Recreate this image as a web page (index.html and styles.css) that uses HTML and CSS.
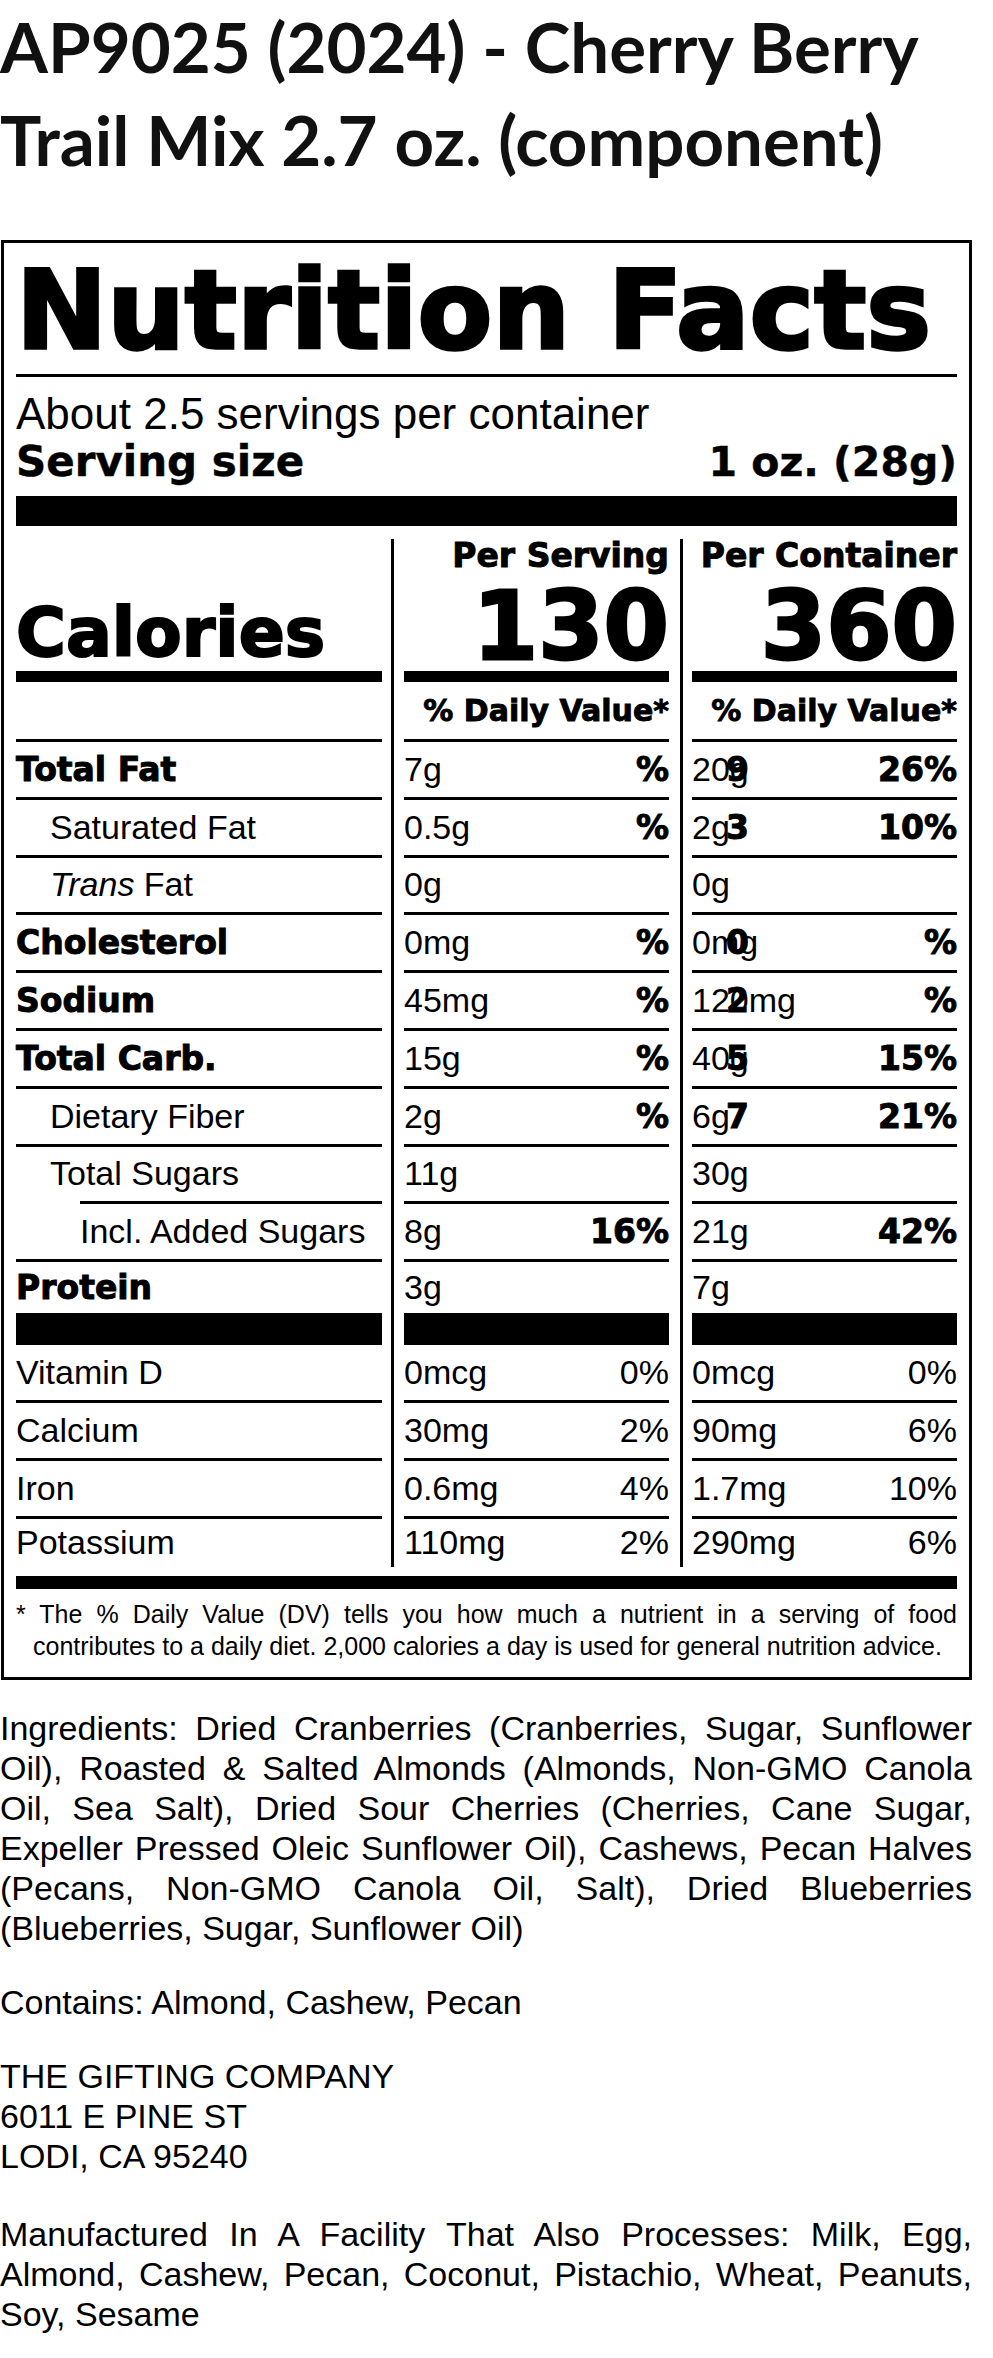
FILE: index.html
```html
<!DOCTYPE html>
<html lang="en">
<head>
<meta charset="utf-8">
<title>AP9025 (2024) - Cherry Berry Trail Mix 2.7 oz. (component)</title>
<link rel="stylesheet" href="styles.css">
</head>
<body>
<div class="page">
  <h1 class="product-title">AP9025 (2024) - Cherry Berry Trail Mix 2.7 oz. (component)</h1>

  <section class="label">
    <h2 class="nf-heading heavy">Nutrition Facts</h2>
    <div class="rule-thin"></div>
    <p class="servings">About 2.5 servings per container</p>
    <div class="serving-size heavy"><span class="ss-label">Serving size</span><span class="ss-value">1 oz. (28g)</span></div>
    <div class="bar-thick"></div>

    <div class="columns">
      <div class="col col-names">
        <div class="head head-names"><span class="calories heavy">Calories</span></div>
        <div class="bar-cal"></div>
        <div class="cell dv-head"></div>
        <div class="cell heavy-cell">Total Fat</div>
        <div class="cell indent">Saturated Fat</div>
        <div class="cell indent"><span><i>Trans</i> Fat</span></div>
        <div class="cell heavy-cell">Cholesterol</div>
        <div class="cell heavy-cell">Sodium</div>
        <div class="cell heavy-cell">Total Carb.</div>
        <div class="cell indent">Dietary Fiber</div>
        <div class="cell sugars"><span class="sugars-text">Total Sugars</span></div>
        <div class="cell indent2">Incl. Added Sugars</div>
        <div class="cell protein heavy-cell">Protein</div>
        <div class="bar-protein"></div>
        <div class="cell vit">Vitamin D</div>
        <div class="cell vit">Calcium</div>
        <div class="cell vit">Iron</div>
        <div class="cell vit vit-last">Potassium</div>
      </div>

      <div class="col col-values col-serving">
        <div class="head head-values">
          <span class="per heavy">Per Serving</span>
          <span class="big heavy">130</span>
        </div>
        <div class="bar-cal"></div>
        <div class="cell dv-head"><span></span><span class="dv-title heavy">% Daily Value*</span></div>
        <div class="cell"><span>7g</span><span class="dv heavy">%</span></div>
        <div class="cell"><span>0.5g</span><span class="dv heavy">%</span></div>
        <div class="cell"><span>0g</span></div>
        <div class="cell"><span>0mg</span><span class="dv heavy">%</span></div>
        <div class="cell"><span>45mg</span><span class="dv heavy">%</span></div>
        <div class="cell"><span>15g</span><span class="dv heavy">%</span></div>
        <div class="cell"><span>2g</span><span class="dv heavy">%</span></div>
        <div class="cell"><span>11g</span></div>
        <div class="cell"><span>8g</span><span class="dv heavy">16%</span></div>
        <div class="cell protein"><span>3g</span></div>
        <div class="bar-protein"></div>
        <div class="cell vit"><span>0mcg</span><span>0%</span></div>
        <div class="cell vit"><span>30mg</span><span>2%</span></div>
        <div class="cell vit"><span>0.6mg</span><span>4%</span></div>
        <div class="cell vit vit-last"><span>110mg</span><span>2%</span></div>
      </div>

      <div class="col col-values col-container">
        <div class="head head-values">
          <span class="per heavy">Per Container</span>
          <span class="big heavy">360</span>
        </div>
        <div class="bar-cal"></div>
        <div class="cell dv-head"><span></span><span class="dv-title heavy">% Daily Value*</span></div>
        <div class="cell"><span>20g</span><span class="stray heavy">9</span><span class="dv heavy">26%</span></div>
        <div class="cell"><span>2g</span><span class="stray heavy">3</span><span class="dv heavy">10%</span></div>
        <div class="cell"><span>0g</span></div>
        <div class="cell"><span>0mg</span><span class="stray heavy">0</span><span class="dv heavy">%</span></div>
        <div class="cell"><span>120mg</span><span class="stray heavy">2</span><span class="dv heavy">%</span></div>
        <div class="cell"><span>40g</span><span class="stray heavy">5</span><span class="dv heavy">15%</span></div>
        <div class="cell"><span>6g</span><span class="stray heavy">7</span><span class="dv heavy">21%</span></div>
        <div class="cell"><span>30g</span></div>
        <div class="cell"><span>21g</span><span class="dv heavy">42%</span></div>
        <div class="cell protein"><span>7g</span></div>
        <div class="bar-protein"></div>
        <div class="cell vit"><span>0mcg</span><span>0%</span></div>
        <div class="cell vit"><span>90mg</span><span>6%</span></div>
        <div class="cell vit"><span>1.7mg</span><span>10%</span></div>
        <div class="cell vit vit-last"><span>290mg</span><span>6%</span></div>
      </div>
    </div>

    <div class="bar-bottom"></div>
    <p class="footnote">* The % Daily Value (DV) tells you how much a nutrient in a serving of food contributes to a daily diet. 2,000 calories a day is used for general nutrition advice.</p>
  </section>

  <div class="info">
    <p class="ingredients">Ingredients: Dried Cranberries (Cranberries, Sugar, Sunflower Oil), Roasted &amp; Salted Almonds (Almonds, Non-GMO Canola Oil, Sea Salt), Dried Sour Cherries (Cherries, Cane Sugar, Expeller Pressed Oleic Sunflower Oil), Cashews, Pecan Halves (Pecans, Non-GMO Canola Oil, Salt), Dried Blueberries (Blueberries, Sugar, Sunflower Oil)</p>
    <p>Contains: Almond, Cashew, Pecan</p>
    <p>THE GIFTING COMPANY<br>6011 E PINE ST<br>LODI, CA 95240</p>
    <p class="facility">Manufactured In A Facility That Also Processes: Milk, Egg, Almond, Cashew, Pecan, Coconut, Pistachio, Wheat, Peanuts, Soy, Sesame</p>
  </div>
</div>
</body>
</html>
```

FILE: styles.css
```css
* {
  box-sizing: border-box;
}

body {
  margin: 0;
  background: #fff;
  color: #000;
  font-family: "Liberation Sans", Arial, sans-serif;
}

.page {
  width: 972px;
}

.product-title {
  margin: 0;
  font-family: Lato, "Liberation Sans", sans-serif;
  font-weight: 700;
  font-size: 69px;
  line-height: 93px;
  color: #111;
}

.heavy {
  font-family: "DejaVu Sans", "Liberation Sans", sans-serif;
  font-weight: 700;
  -webkit-text-stroke: 0.03em #000;
}

/* ---------- label ---------- */
.label {
  width: 971px;
  margin: 54px 0 0 1px;
  border: 3px solid #000;
  padding: 13px 12px 15px;
}

.nf-heading {
  margin: 0;
  font-size: 109px;
  line-height: 110px;
  white-space: nowrap;
}

.rule-thin {
  height: 3px;
  margin-top: 8px;
  background: #000;
}

.servings {
  margin: 14px 0 0;
  font-size: 44px;
  line-height: 46px;
}

.serving-size {
  display: flex;
  justify-content: space-between;
  align-items: baseline;
  padding-top: 5px;
  line-height: 40px;
}

.ss-label {
  font-size: 42px;
}

.ss-value {
  font-size: 41px;
}

.bar-thick {
  height: 30px;
  margin-top: 14px;
  background: #000;
}

/* ---------- columns ---------- */
.columns {
  display: flex;
  margin-top: 13px;
}

.col-names {
  width: 366px;
}

.col-values {
  box-sizing: content-box;
  width: 265px;
  border-left: 3px solid #000;
}

.col-serving {
  margin-left: 9px;
  padding-left: 10px;
}

.col-container {
  margin-left: 11px;
  padding-left: 9px;
}

.head {
  height: 132px;
  display: flex;
  flex-direction: column;
}

.head-names {
  justify-content: flex-end;
}

.calories {
  font-size: 68px;
  line-height: 77px;
}

.head-values {
  justify-content: space-between;
  align-items: flex-end;
}

.per {
  font-size: 33px;
  line-height: 34px;
  white-space: nowrap;
}

.big {
  font-size: 94px;
  line-height: 89px;
}

.bar-cal {
  height: 11px;
  background: #000;
}

.cell {
  position: relative;
  height: 57.8px;
  display: flex;
  align-items: center;
  justify-content: space-between;
  border-bottom: 3px solid #000;
  font-size: 34px;
  white-space: nowrap;
}

.cell.dv-head {
  height: 60px;
}

.dv-title {
  font-size: 30px;
}

.heavy-cell {
  font-family: "DejaVu Sans", "Liberation Sans", sans-serif;
  font-weight: 700;
  font-size: 33px;
  -webkit-text-stroke: 0.03em #000;
}

.dv {
  font-size: 33px;
}

.indent {
  padding-left: 34px;
}

.indent2 {
  padding-left: 64px;
}

.sugars {
  margin-left: 64px;
}

.sugars-text {
  margin-left: -30px;
}

.cell.protein {
  height: 50.8px;
  border-bottom: 0;
}

.bar-protein {
  height: 32px;
  background: #000;
}

.cell.vit {
  height: 58px;
}

.cell.vit-last {
  height: 48px;
  border-bottom: 0;
}

/* per-serving DV digits that spill into the container column */
.stray {
  position: absolute;
  left: 34px;
  top: 0;
  bottom: 0;
  display: flex;
  align-items: center;
  font-size: 33px;
}

.bar-bottom {
  height: 13px;
  margin-top: 9px;
  background: #000;
}

.footnote {
  margin: 9px 0 0;
  padding-left: 17px;
  text-indent: -17px;
  font-size: 25px;
  line-height: 32px;
  text-align: justify;
}

/* ---------- below label ---------- */
.info p {
  margin: 34px 0 0;
  font-size: 34px;
  line-height: 40px;
  text-align: justify;
}

.info .ingredients {
  margin-top: 28px;
}

.info .facility {
  margin-top: 38px;
}
```
